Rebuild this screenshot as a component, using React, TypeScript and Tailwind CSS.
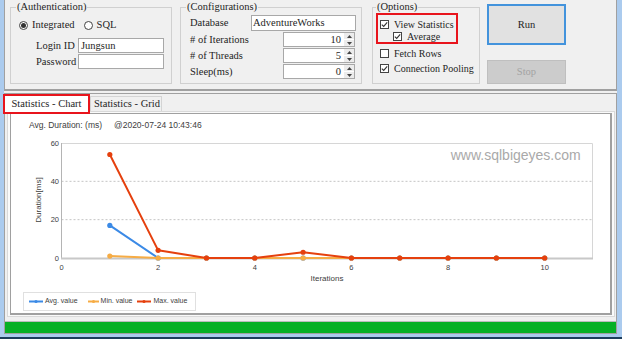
import React from "react";

const X = (i: number) => 50.5 + 48.32 * i;
const Y = (v: number) => 124 - v * 1.91667;

const series = [
  { name: "Avg. value", color: "#3b8ae6", data: [17, 0, 0, 0, 0, 0, 0, 0, 0, 0] },
  { name: "Min. value", color: "#f6ac45", data: [1, 0, 0, 0, 0, 0, 0, 0, 0, 0] },
  { name: "Max. value", color: "#e5400e", data: [54, 4, 0, 0, 3, 0, 0, 0, 0, 0] },
];

function Radio({ checked }: { checked?: boolean }) {
  return (
    <span className="w-[9px] h-[9px] rounded-full border border-[#444] bg-white flex items-center justify-center shrink-0">
      {checked && <span className="w-[5px] h-[5px] rounded-full bg-[#333]" />}
    </span>
  );
}

function Check({ checked }: { checked?: boolean }) {
  return (
    <span className="w-[9px] h-[9px] border border-[#444] bg-white flex items-center justify-center shrink-0">
      {checked && (
        <svg width="7" height="7" viewBox="0 0 7 7">
          <path d="M0.8 3.6 L2.7 5.4 L6.2 1.3" stroke="#333" strokeWidth="1.1" fill="none" />
        </svg>
      )}
    </span>
  );
}

function Spin({ value }: { value: string }) {
  return (
    <div className="w-[72px] h-[15px] border border-[#a8a8a8] bg-white flex">
      <div className="flex-1 text-right pr-[3px] leading-[13px]">{value}</div>
      <div className="w-[10px] flex flex-col bg-[#ececec]">
        <div className="flex-1 flex items-center justify-center border-b border-white">
          <svg width="5" height="3" viewBox="0 0 5 3">
            <path d="M0 3 L2.5 0 L5 3 Z" fill="#444" />
          </svg>
        </div>
        <div className="flex-1 flex items-center justify-center">
          <svg width="5" height="3" viewBox="0 0 5 3">
            <path d="M0 0 L2.5 3 L5 0 Z" fill="#444" />
          </svg>
        </div>
      </div>
    </div>
  );
}

function Chart() {
  const ticksY = [60, 40, 20, 0];
  const ticksX = [0, 2, 4, 6, 8, 10];
  return (
    <svg width="599" height="156" viewBox="0 0 599 156" fontFamily="Liberation Sans, Arial, sans-serif">
      <line x1={50.5} x2={581.5} y1={9.5} y2={9.5} stroke="#d6d6d6" />
      <line x1={581.5} x2={581.5} y1={9.5} y2={124} stroke="#d6d6d6" />
      <line x1={50.5} x2={581.5} y1={Y(40)} y2={Y(40)} stroke="#c4c4c4" strokeDasharray="2 2" />
      <line x1={50.5} x2={581.5} y1={Y(20)} y2={Y(20)} stroke="#c4c4c4" strokeDasharray="2 2" />
      <line x1={50.5} x2={50.5} y1={9} y2={124} stroke="#b4b4b4" />
      <line x1={50} x2={582} y1={124.5} y2={124.5} stroke="#c8c8c8" strokeWidth={2} />
      {ticksY.map((t) => (
        <text key={t} x={48} y={Y(t)} dy="0.35em" fontSize="7.5" fill="#404040" textAnchor="end">
          {t}
        </text>
      ))}
      {ticksX.map((t) => (
        <text key={t} x={X(t)} y={133} dy="0.35em" fontSize="7.5" fill="#404040" textAnchor="middle">
          {t}
        </text>
      ))}
      <text transform="translate(27,66) rotate(-90)" textAnchor="middle" dy="0.35em" fontSize="8" fill="#404040">
        Duration[ms]
      </text>
      <text x={316} y={144.5} textAnchor="middle" dy="0.35em" fontSize="8" fill="#404040">
        Iterations
      </text>
      <text x={569.7} y={21} textAnchor="end" dy="0.35em" fontSize="14" fill="#a9a9a9">
        www.sqlbigeyes.com
      </text>
      {series.map((s) => (
        <g key={s.name}>
          <polyline
            points={s.data.map((v, i) => `${X(i + 1)},${Y(v)}`).join(" ")}
            fill="none"
            stroke={s.color}
            strokeWidth={2}
            strokeLinejoin="round"
          />
          {s.data.map((v, i) => (
            <circle key={i} cx={X(i + 1)} cy={Y(v)} r={2.6} fill={s.color} />
          ))}
        </g>
      ))}
    </svg>
  );
}

function LegendItem({ color, label, w, className }: { color: string; label: string; w: number; className?: string }) {
  return (
    <div className={"flex items-center " + (className ?? "")}>
      <svg width={w} height="5" viewBox={`0 0 ${w} 5`}>
        <line x1="0" x2={w} y1="2.5" y2="2.5" stroke={color} strokeWidth="2" />
        <circle cx={w / 2} cy="2.5" r="1.6" fill={color} />
      </svg>
      <span className="ml-[2px]">{label}</span>
    </div>
  );
}

export default function App() {
  return (
    <div className="w-[622px] h-[339px] bg-[#abcbee] flex flex-col overflow-hidden text-[#1e1e1e]">
      <div className="flex h-[334px]">
        <div className="w-[4px] shrink-0" />
        <div className="w-[613px] shrink-0 flex flex-col bg-[#f0f0f0]">
          {/* Top panel */}
          <div className="h-[91px] border-x border-b-2 border-[#a0a0a0] flex pl-[5px] text-[10.5px] font-['Liberation_Serif'] whitespace-nowrap">
            <fieldset className="w-[162px] h-[84px] border border-[#d0d0d0] shrink-0">
              <legend className="ml-[5px] px-[1px] leading-[14px]">(Authentication)</legend>
              <div className="flex flex-col pl-[8px]">
                <div className="mt-[4px] h-[14px] flex items-center">
                  <Radio checked />
                  <span className="ml-[4px]">Integrated</span>
                  <span className="ml-[9px]">
                    <Radio />
                  </span>
                  <span className="ml-[4px]">SQL</span>
                </div>
                <div className="mt-[6px] h-[15px] flex items-center pl-[17px]">
                  <span className="w-[42px]">Login ID</span>
                  <div className="w-[86px] h-[15px] border border-[#a8a8a8] bg-white pl-[2px] leading-[13px]">Jungsun</div>
                </div>
                <div className="mt-[1px] h-[15px] flex items-center pl-[17px]">
                  <span className="w-[42px]">Password</span>
                  <div className="w-[86px] h-[15px] border border-[#a8a8a8] bg-white" />
                </div>
              </div>
            </fieldset>

            <fieldset className="w-[182px] h-[84px] ml-[8px] border border-[#d0d0d0] shrink-0">
              <legend className="ml-[5px] px-[1px] leading-[14px]">(Configurations)</legend>
              <div className="flex flex-col pl-[9px]">
                <div className="mt-[1px] h-[16px] flex items-center">
                  <span className="w-[61px]">Database</span>
                  <div className="w-[105px] h-[16px] border border-[#a8a8a8] bg-white pl-[1px] leading-[14px]">AdventureWorks</div>
                </div>
                <div className="mt-[1px] h-[15px] flex items-center">
                  <span className="w-[93px]"># of Iterations</span>
                  <Spin value="10" />
                </div>
                <div className="mt-[1px] h-[15px] flex items-center">
                  <span className="w-[93px]"># of Threads</span>
                  <Spin value="5" />
                </div>
                <div className="mt-[1px] h-[15px] flex items-center">
                  <span className="w-[93px]">Sleep(ms)</span>
                  <Spin value="0" />
                </div>
              </div>
            </fieldset>

            <fieldset className="w-[108px] h-[84px] ml-[10px] border border-[#d0d0d0] shrink-0 text-[10px]">
              <legend className="ml-[3px] px-[1px] leading-[14px] text-[10.5px]">(Options)</legend>
              <div className="flex flex-col">
                <div className="-mt-[1px] ml-[3px] w-[82px] h-[31px] border-2 border-[#e8141c] pt-[3px] pl-[2px] flex flex-col">
                  <div className="h-[12px] flex items-center gap-[5px]">
                    <Check checked />
                    <span>View Statistics</span>
                  </div>
                  <div className="h-[12px] flex items-center gap-[5px] pl-[13px]">
                    <Check checked />
                    <span>Average</span>
                  </div>
                </div>
                <div className="mt-[3px] ml-[7px] h-[12px] flex items-center gap-[5px]">
                  <Check />
                  <span>Fetch Rows</span>
                </div>
                <div className="mt-[3px] ml-[7px] h-[12px] flex items-center gap-[5px]">
                  <Check checked />
                  <span>Connection Pooling</span>
                </div>
              </div>
            </fieldset>

            <div className="ml-[7px] flex flex-col shrink-0">
              <div className="mt-[4px] w-[79px] h-[41px] border-2 border-[#4393dc] bg-[#e1e1e1] flex items-center justify-center">
                Run
              </div>
              <div className="mt-[15px] w-[79px] h-[24px] border border-[#bfbfbf] bg-[#cccccc] text-[#a3a3a3] flex items-center justify-center">
                Stop
              </div>
            </div>
          </div>

          <div className="h-[2px]" />

          {/* Lower panel */}
          <div className="flex-1 border border-[#a0a0a0] flex flex-col">
            <div className="h-[17px] flex items-end relative z-10 text-[10.5px] font-['Liberation_Serif'] whitespace-nowrap">
              <div className="-ml-[2px] -mb-[3px] w-[87px] h-[20px] border-2 border-[#e8141c] bg-white flex items-center justify-center pb-[1px]">
                Statistics - Chart
              </div>
              <div className="w-[72px] h-[15px] border border-b-0 border-[#d4d4d4] bg-[#f0f0f0] pl-[3px] leading-[14px]">
                Statistics - Grid
              </div>
            </div>
            <div className="ml-[2px] mr-[1px] h-[206px] border border-[#d9d9d9] bg-[#fafafa] px-[2px] py-[1px]">
              <div className="h-[202px] border-t border-l border-r-2 border-b-2 border-[#a0a0a0] bg-white flex flex-col font-['Liberation_Sans'] text-[#404040]">
                <div className="h-[20px] pt-[4px] pl-[18px] text-[8.5px] leading-[14px] flex whitespace-nowrap">
                  <span>Avg. Duration: (ms)</span>
                  <span className="ml-[12px]">@2020-07-24 10:43:46</span>
                </div>
                <Chart />
                <div className="ml-[12px] mt-[2px] w-[173px] h-[19px] border border-[#e0e0e0] flex items-center pl-[5px] text-[7px] whitespace-nowrap">
                  <LegendItem color="#3b8ae6" label="Avg. value" w={14} />
                  <LegendItem color="#f6ac45" label="Min. value" w={11} className="ml-[10px]" />
                  <LegendItem color="#e5400e" label="Max. value" w={14} className="ml-[5px]" />
                </div>
              </div>
            </div>
            <div className="h-[4px]" />
            <div className="h-[12px] border-t border-[#bcbcbc] bg-[#06b025]" />
          </div>
        </div>
        <div className="flex-1" />
      </div>
      <div className="h-[3px]" />
      <div className="h-[2px] bg-[#1c3d5c]" />
    </div>
  );
}
